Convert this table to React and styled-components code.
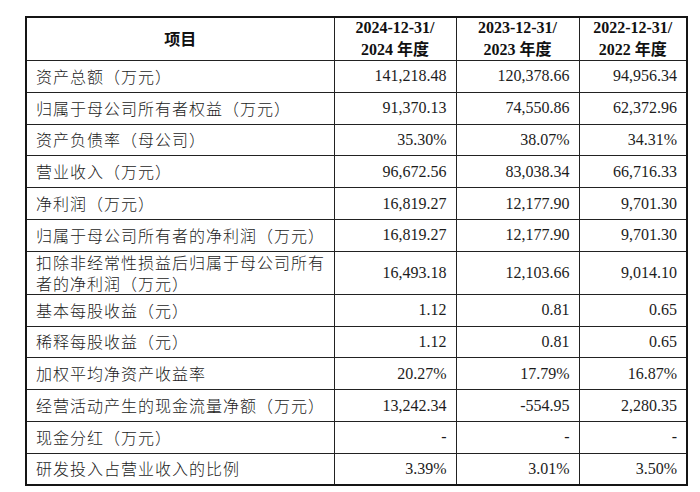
import React from 'react';
import styled, { createGlobalStyle } from 'styled-components';

const Global = createGlobalStyle`
  body {
    margin: 0;
    background: #fff;
    color: #1c1c1c;
  }
`

const Page = styled.div`
  padding: 16px 0 0 25px;
`

const Table = styled.table`
  border-collapse: collapse;
  width: 661px;
  table-layout: fixed;
  border: 2px solid #151515;
`

const HeadCell = styled.th`
  height: 41px;
  padding: 0;
  border: 1px solid #222;
  font-family: "Liberation Serif", "Noto Sans CJK SC", serif;
  font-size: 16px;
  font-weight: bold;
  line-height: 20px;
  text-align: center;
  vertical-align: middle;
  color: #111;
`

const Row = styled.tr`
  height: ${p => (p.tall ? '42px' : '31.8px')};
`

const LabelCell = styled.td`
  padding: 0 0 0 9px;
  border: 1px solid #222;
  font-family: "Noto Sans CJK SC", sans-serif;
  font-weight: 300;
  font-size: 16px;
  letter-spacing: 1px;
  line-height: 21px;
  white-space: nowrap;
  vertical-align: middle;
  color: #1c1c1c;
`

const NumCell = styled.td`
  padding: 0 9px 0 0;
  border: 1px solid #222;
  font-family: "Liberation Serif", serif;
  font-size: 16px;
  text-align: right;
  vertical-align: middle;
  color: #1c1c1c;
`

const Cjk = styled.span`
  font-family: "Noto Sans CJK SC", sans-serif;
`

const years = ['2024', '2023', '2022']

const rows = [
  ['资产总额（万元）', '141,218.48', '120,378.66', '94,956.34'],
  ['归属于母公司所有者权益（万元）', '91,370.13', '74,550.86', '62,372.96'],
  ['资产负债率（母公司）', '35.30%', '38.07%', '34.31%'],
  ['营业收入（万元）', '96,672.56', '83,038.34', '66,716.33'],
  ['净利润（万元）', '16,819.27', '12,177.90', '9,701.30'],
  ['归属于母公司所有者的净利润（万元）', '16,819.27', '12,177.90', '9,701.30'],
  [['扣除非经常性损益后归属于母公司所有', '者的净利润（万元）'], '16,493.18', '12,103.66', '9,014.10'],
  ['基本每股收益（元）', '1.12', '0.81', '0.65'],
  ['稀释每股收益（元）', '1.12', '0.81', '0.65'],
  ['加权平均净资产收益率', '20.27%', '17.79%', '16.87%'],
  ['经营活动产生的现金流量净额（万元）', '13,242.34', '-554.95', '2,280.35'],
  ['现金分红（万元）', '-', '-', '-'],
  ['研发投入占营业收入的比例', '3.39%', '3.01%', '3.50%'],
]

function App() {
  return (
    <Page>
      <Global />
      <Table>
        <colgroup>
          <col style={{ width: 308 }} />
          <col style={{ width: 122 }} />
          <col style={{ width: 123 }} />
          <col style={{ width: 108 }} />
        </colgroup>
        <thead>
          <tr>
            <HeadCell><Cjk>项目</Cjk></HeadCell>
            {years.map(y => (
              <HeadCell key={y}>
                {y}-12-31/<br />
                {y} <Cjk>年度</Cjk>
              </HeadCell>
            ))}
          </tr>
        </thead>
        <tbody>
          {rows.map((r, i) => {
            const tall = Array.isArray(r[0])
            return (
              <Row key={i} tall={tall ? 1 : 0}>
                <LabelCell>
                  {tall ? <>{r[0][0]}<br />{r[0][1]}</> : r[0]}
                </LabelCell>
                <NumCell>{r[1]}</NumCell>
                <NumCell>{r[2]}</NumCell>
                <NumCell>{r[3]}</NumCell>
              </Row>
            )
          })}
        </tbody>
      </Table>
    </Page>
  )
}

export default App;
